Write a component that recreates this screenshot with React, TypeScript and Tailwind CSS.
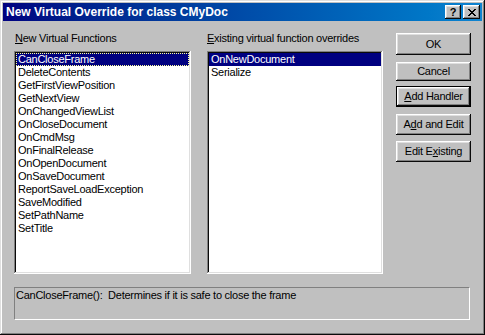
const font = { fontFamily: '"Liberation Sans", Arial, sans-serif' };

const newFunctions = [
  "CanCloseFrame",
  "DeleteContents",
  "GetFirstViewPosition",
  "GetNextView",
  "OnChangedViewList",
  "OnCloseDocument",
  "OnCmdMsg",
  "OnFinalRelease",
  "OnOpenDocument",
  "OnSaveDocument",
  "ReportSaveLoadException",
  "SaveModified",
  "SetPathName",
  "SetTitle",
];

const existing = ["OnNewDocument", "Serialize"];

const raised =
  "shadow-[inset_-1px_-1px_#0a0a0a,inset_1px_1px_#ffffff,inset_-2px_-2px_#808080,inset_2px_2px_#dfdfdf]";
const sunken =
  "shadow-[inset_-1px_-1px_#ffffff,inset_1px_1px_#808080,inset_-2px_-2px_#dfdfdf,inset_2px_2px_#0a0a0a]";

function ListBox({
  items,
  width,
  focused,
}: {
  items: string[];
  width: string;
  focused?: boolean;
}) {
  return (
    <div className={`${width} h-[223px] bg-white p-[2px] ${sunken}`}>
      {items.map((item, i) => (
        <div
          key={item}
          className={`h-[13px] pl-[2px] leading-[13px] text-[11px] tracking-[-0.25px] whitespace-nowrap ${
            i === 0
              ? `bg-[#000080] text-white ${
                  focused ? "outline-1 outline-dotted -outline-offset-1 outline-[#ffff99]" : ""
                }`
              : "text-black"
          }`}
        >
          {item}
        </div>
      ))}
    </div>
  );
}

function Button({
  children,
  className = "",
  isDefault,
}: {
  children: React.ReactNode;
  className?: string;
  isDefault?: boolean;
}) {
  if (isDefault) {
    return (
      <div className={`w-[75px] border border-black ${className}`}>
        <div
          className={`flex h-full items-center justify-center text-[11px] tracking-[-0.25px] text-black ${raised}`}
        >
          {children}
        </div>
      </div>
    );
  }
  return (
    <div
      className={`flex w-[75px] items-center justify-center text-[11px] tracking-[-0.25px] text-black ${raised} ${className}`}
    >
      {children}
    </div>
  );
}

export default function App() {
  return (
    <div
      style={font}
      className={`flex h-[335px] w-[485px] flex-col bg-[#c0c0c0] p-[3px] shadow-[inset_-1px_-1px_#0a0a0a,inset_1px_1px_#dfdfdf,inset_-2px_-2px_#808080,inset_2px_2px_#ffffff]`}
    >
      {/* title bar */}
      <div className="flex h-[18px] items-center bg-gradient-to-r from-[#000080] to-[#1084d0] pl-[3px] pr-[2px]">
        <span className="flex-1 text-[12px] font-bold leading-none text-white">
          New Virtual Override for class CMyDoc
        </span>
        <div className="flex gap-[1px]">
          <div
            className={`flex h-[14px] w-[16px] items-center justify-center bg-[#c0c0c0] text-[11px] font-bold leading-none text-black ${raised}`}
          >
            ?
          </div>
          <div
            className={`ml-[1px] flex h-[14px] w-[17px] items-center justify-center bg-[#c0c0c0] ${raised}`}
          >
            <svg width="8" height="7" viewBox="0 0 8 7" shapeRendering="crispEdges">
              <path
                d="M0 0h2v1h-2zM6 0h2v1h-2zM1 1h2v1h-2zM5 1h2v1h-2zM2 2h4v1h-4zM3 3h2v1h-2zM2 4h4v1h-4zM1 5h2v1h-2zM5 5h2v1h-2zM0 6h2v1h-2zM6 6h2v1h-2z"
                fill="#000"
              />
            </svg>
          </div>
        </div>
      </div>

      {/* content */}
      <div className="flex flex-col px-[11px] pt-[11px]">
        <div className="flex">
          <div className="flex flex-col">
            <div className="h-[13px] pl-[1px] text-[11px] leading-[13px] tracking-[-0.25px] text-black">
              <span className="underline">N</span>ew Virtual Functions
            </div>
            <div className="mt-[6px]">
              <ListBox items={newFunctions} width="w-[177px]" focused />
            </div>
          </div>
          <div className="ml-[16px] flex flex-col">
            <div className="h-[13px] text-[11px] leading-[13px] tracking-[-0.25px] text-black">
              <span className="underline">E</span>xisting virtual function overrides
            </div>
            <div className="mt-[6px]">
              <ListBox items={existing} width="w-[176px]" />
            </div>
          </div>
          <div className="ml-[13px] flex flex-col">
            <Button className="mt-[1px] h-[22px]">OK</Button>
            <Button className="mt-[7px] h-[19px]">Cancel</Button>
            <Button isDefault className="mt-[5px] h-[21px]">
              <span>
                <span className="underline">A</span>dd Handler
              </span>
            </Button>
            <Button className="mt-[7px] h-[21px]">
              <span>
                A<span className="underline">d</span>d and Edit
              </span>
            </Button>
            <Button className="mt-[6px] h-[21px]">
              <span>
                Edit E<span className="underline">x</span>isting
              </span>
            </Button>
          </div>
        </div>

        <div className="mt-[13px] h-[33px] w-[456px] border border-b-white border-l-[#808080] border-r-white border-t-[#808080] pl-[1px] pt-[1px] text-[11px] leading-[13px] tracking-[-0.25px] text-black whitespace-pre">
          {"CanCloseFrame():  Determines if it is safe to close the frame"}
        </div>
      </div>
    </div>
  );
}
